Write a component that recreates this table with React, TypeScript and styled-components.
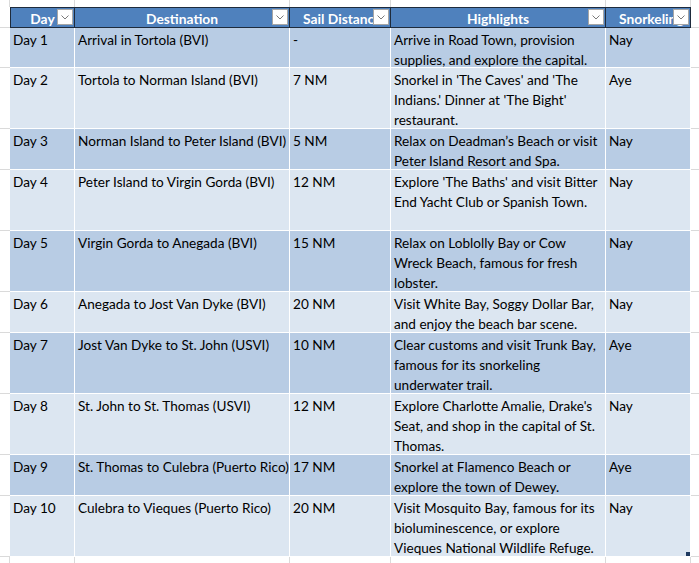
import React from "react";
import styled, { createGlobalStyle } from "styled-components";

const GlobalStyle = createGlobalStyle`
  html, body {
    margin: 0;
    padding: 0;
    background: #ffffff;
  }
  body {
    font-family: Lato, "Liberation Sans", sans-serif;
    -webkit-font-smoothing: antialiased;
  }
`;

type Trip = {
  day: string;
  destination: string;
  distance: string;
  highlights: string;
  snorkeling: string;
  height: number;
};

const columns = [
  { key: "day", label: "Day", width: 65 },
  { key: "destination", label: "Destination", width: 215 },
  { key: "distance", label: "Sail Distance", width: 101 },
  { key: "highlights", label: "Highlights", width: 215 },
  { key: "snorkeling", label: "Snorkeling", width: 85 },
] as const;

const trips: Trip[] = [
  {
    day: "Day 1",
    destination: "Arrival in Tortola (BVI)",
    distance: "-",
    highlights: "Arrive in Road Town, provision\nsupplies, and explore the capital.",
    snorkeling: "Nay",
    height: 40,
  },
  {
    day: "Day 2",
    destination: "Tortola to Norman Island (BVI)",
    distance: "7 NM",
    highlights: "Snorkel in 'The Caves' and 'The\nIndians.' Dinner at 'The Bight'\nrestaurant.",
    snorkeling: "Aye",
    height: 61,
  },
  {
    day: "Day 3",
    destination: "Norman Island to Peter Island (BVI)",
    distance: "5 NM",
    highlights: "Relax on Deadman\u2019s Beach or visit\nPeter Island Resort and Spa.",
    snorkeling: "Nay",
    height: 41,
  },
  {
    day: "Day 4",
    destination: "Peter Island to Virgin Gorda (BVI)",
    distance: "12 NM",
    highlights: "Explore 'The Baths' and visit Bitter\nEnd Yacht Club or Spanish Town.",
    snorkeling: "Nay",
    height: 61,
  },
  {
    day: "Day 5",
    destination: "Virgin Gorda to Anegada (BVI)",
    distance: "15 NM",
    highlights: "Relax on Loblolly Bay or Cow\nWreck Beach, famous for fresh\nlobster.",
    snorkeling: "Nay",
    height: 61,
  },
  {
    day: "Day 6",
    destination: "Anegada to Jost Van Dyke (BVI)",
    distance: "20 NM",
    highlights: "Visit White Bay, Soggy Dollar Bar,\nand enjoy the beach bar scene.",
    snorkeling: "Nay",
    height: 41,
  },
  {
    day: "Day 7",
    destination: "Jost Van Dyke to St. John (USVI)",
    distance: "10 NM",
    highlights: "Clear customs and visit Trunk Bay,\nfamous for its snorkeling\nunderwater trail.",
    snorkeling: "Aye",
    height: 61,
  },
  {
    day: "Day 8",
    destination: "St. John to St. Thomas (USVI)",
    distance: "12 NM",
    highlights: "Explore Charlotte Amalie, Drake's\nSeat, and shop in the capital of St.\nThomas.",
    snorkeling: "Nay",
    height: 61,
  },
  {
    day: "Day 9",
    destination: "St. Thomas to Culebra (Puerto Rico)",
    distance: "17 NM",
    highlights: "Snorkel at Flamenco Beach or\nexplore the town of Dewey.",
    snorkeling: "Aye",
    height: 41,
  },
  {
    day: "Day 10",
    destination: "Culebra to Vieques (Puerto Rico)",
    distance: "20 NM",
    highlights: "Visit Mosquito Bay, famous for its\nbioluminescence, or explore\nVieques National Wildlife Refuge.",
    snorkeling: "Nay",
    height: 61,
  },
];

const FilterButton = () => (
  <FilterBox>
    <svg width="8" height="5" viewBox="0 0 8 5">
      <polyline points="0.5,0.5 4,4 7.5,0.5" fill="none" stroke="#7a7a7a" strokeWidth="1" />
    </svg>
  </FilterBox>
);

export default function App() {
  const template = `10px ${columns.map((c) => `${c.width}px`).join(" ")} 1fr`;
  const rows = `7px 21px ${trips.map((t) => `${t.height}px`).join(" ")} 1fr`;

  return (
    <>
      <GlobalStyle />
      <Sheet style={{ gridTemplateColumns: template, gridTemplateRows: rows }}>
        {/* empty row above the table */}
        <Gutter $right />
        {columns.map((c) => (
          <Gutter key={`top-${c.key}`} $right />
        ))}
        <Gutter />

        <Gutter $bottom />
        {columns.map((c, i) => (
          <HeaderCell key={c.key} $first={i === 0}>
            <HeaderText>{c.label}</HeaderText>
            <FilterButton />
          </HeaderCell>
        ))}
        <Gutter $bottom />

        {trips.map((t, r) => (
          <React.Fragment key={t.day}>
            <Gutter $bottom />
            {columns.map((c, i) => (
              <Cell key={c.key} $dark={r % 2 === 0}>
                {t[c.key]}
                {r === trips.length - 1 && i === columns.length - 1 && <ResizeHandle />}
              </Cell>
            ))}
            <Gutter $bottom />
          </React.Fragment>
        ))}

        {/* empty row below the table */}
        <Gutter $right />
        {columns.map((c) => (
          <Gutter key={`bottom-${c.key}`} $right />
        ))}
        <Gutter />
      </Sheet>
    </>
  );
}

const Sheet = styled.div`
  display: grid;
  width: 699px;
  height: 563px;
  overflow: hidden;
  background: #ffffff;
`;

const Gutter = styled.div<{ $right?: boolean; $bottom?: boolean }>`
  box-sizing: border-box;
  border-right: ${(p) => (p.$right ? "1px solid #dadada" : "none")};
  border-bottom: ${(p) => (p.$bottom ? "1px solid #dadada" : "none")};
`;

const HeaderCell = styled.div<{ $first?: boolean }>`
  position: relative;
  box-sizing: border-box;
  display: flex;
  align-items: center;
  background: #4f81bd;
  border-top: 1px solid #1e2b3c;
  border-bottom: 1px solid #1e2b3c;
  border-right: 1px solid #1e2b3c;
  border-left: ${(p) => (p.$first ? "1px solid #1e2b3c" : "none")};
  min-width: 0;
`;

const HeaderText = styled.div`
  flex: 1;
  min-width: 0;
  padding: 2px 13px 0;
  overflow: hidden;
  white-space: nowrap;
  text-align: center;
  color: #ffffff;
  font-size: 13.8px;
  font-weight: 700;
  line-height: 19px;
`;

const FilterBox = styled.div`
  position: absolute;
  top: 1px;
  right: 1px;
  box-sizing: border-box;
  width: 16px;
  height: 16px;
  display: flex;
  align-items: center;
  justify-content: center;
  background: #ffffff;
  border: 1px solid #a6a6a6;
`;

const Cell = styled.div<{ $dark?: boolean }>`
  position: relative;
  box-sizing: border-box;
  min-width: 0;
  padding: 2px 3px 0;
  background: ${(p) => (p.$dark ? "#b8cce4" : "#dce6f1")};
  border-right: 1px solid #ffffff;
  border-bottom: 1px solid #ffffff;
  color: #000000;
  font-size: 13.6px;
  line-height: 20px;
  white-space: pre;
  overflow: hidden;
`;

const ResizeHandle = styled.div`
  position: absolute;
  right: -1px;
  bottom: -1px;
  width: 5px;
  height: 5px;
  background: #1f3a60;
`;
